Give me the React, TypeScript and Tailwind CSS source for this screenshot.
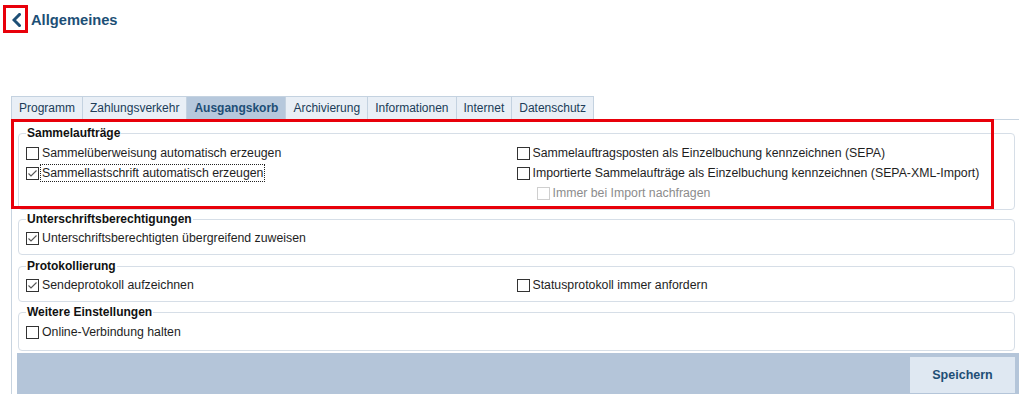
import React from "react";

const Check = ({ checked = false, disabled = false }: { checked?: boolean; disabled?: boolean }) => (
  <span
    className={`w-[13px] h-[13px] shrink-0 border bg-white flex items-center justify-center ${
      disabled ? "border-[#cfcfcf]" : "border-[#333333]"
    }`}
  >
    {checked && (
      <svg width="11" height="11" viewBox="0 0 11 11">
        <polyline points="1.5,5.5 4,8 9.5,2.5" fill="none" stroke="#555" strokeWidth="1.1" />
      </svg>
    )}
  </span>
);

const Row = ({
  label,
  checked,
  disabled,
  focused,
  indent,
}: {
  label: string;
  checked?: boolean;
  disabled?: boolean;
  focused?: boolean;
  indent?: boolean;
}) => (
  <div className={`h-[20px] flex items-center ${indent ? "pl-[20px]" : ""}`}>
    <Check checked={checked} disabled={disabled} />
    <span
      className={`ml-[2px] px-[1px] leading-[16px] text-[12.3px] ${
        disabled ? "text-[#8c8c8c]" : "text-[#1e1e1e]"
      } ${focused ? "outline outline-1 outline-dotted outline-[#222]" : ""}`}
    >
      {label}
    </span>
  </div>
);

const Group = ({ title, children, className = "" }: { title: string; children: React.ReactNode; className?: string }) => (
  <fieldset className={`ml-[1px] mr-[4px] border border-[#d6dee7] rounded-[4px] pl-[7px] pr-[7px] ${className}`}>
    <legend className="px-[1px] text-[12px] leading-[14px] font-bold text-[#111]">{title}</legend>
    <div className="pt-[2px]">{children}</div>
  </fieldset>
);

const tabs = ["Programm", "Zahlungsverkehr", "Ausgangskorb", "Archivierung", "Informationen", "Internet", "Datenschutz"];

export default function App() {
  return (
    <div className="relative w-[1019px] h-[394px] overflow-hidden bg-white font-['Liberation_Sans',Arial,sans-serif]">
      <div className="h-[40px] flex items-center pl-[12px]">
        <svg width="9" height="14" viewBox="0 0 9 14">
          <polyline points="7.5,1.5 2,7 7.5,12.5" fill="none" stroke="#1d4f76" strokeWidth="3" strokeLinecap="square" />
        </svg>
        <span className="ml-[10px] text-[14.7px] font-bold text-[#1d4f76]">Allgemeines</span>
      </div>

      <div className="mt-[56px] ml-[11px] flex h-[23px]">
        {tabs.map((t, i) => (
          <div
            key={t}
            className={`h-[23px] px-[7px] border border-b-0 border-[#c4d2e0] flex items-center text-[12px] ${
              i > 0 ? "-ml-px" : ""
            } ${t === "Ausgangskorb" ? "bg-[#b6c8dc] font-bold text-[#1d4e75]" : "bg-[#e9eff6] text-[#203c58]"}`}
          >
            {t}
          </div>
        ))}
      </div>

      <div className="ml-[11px] border-l border-t border-[#c8d4e0] pl-[5px] pt-[6px] h-[300px]">
        <Group title="Sammelaufträge" className="pb-[6px]">
          <div className="grid grid-cols-2 pt-px">
            <div>
              <Row label="Sammelüberweisung automatisch erzeugen" />
              <Row label="Sammellastschrift automatisch erzeugen" checked focused />
            </div>
            <div>
              <Row label="Sammelauftragsposten als Einzelbuchung kennzeichnen (SEPA)" />
              <Row label="Importierte Sammelaufträge als Einzelbuchung kennzeichnen (SEPA-XML-Import)" />
              <Row label="Immer bei Import nachfragen" disabled indent />
            </div>
          </div>
        </Group>
        <Group title="Unterschriftsberechtigungen" className="mt-[2px] pb-[6px]">
          <Row label="Unterschriftsberechtigten übergreifend zuweisen" checked />
        </Group>
        <Group title="Protokollierung" className="mt-[4px] pb-[6px]">
          <div className="grid grid-cols-2">
            <Row label="Sendeprotokoll aufzeichnen" checked />
            <Row label="Statusprotokoll immer anfordern" />
          </div>
        </Group>
        <Group title="Weitere Einstellungen" className="mt-[3px] pb-[8px]">
          <div className="pt-px">
            <Row label="Online-Verbindung halten" />
          </div>
        </Group>
        <div className="mt-[2px] h-[44px] bg-[#b4c5d9] flex justify-end pt-[4px] pr-[4px]">
          <button className="w-[105px] h-[36px] bg-[#dfe8f2] text-[12.5px] font-bold text-[#1d4e75]">Speichern</button>
        </div>
      </div>

      <div className="absolute left-[3px] top-[5px] w-[25px] h-[28px] border-[3px] border-[#e8000a]" />
      <div className="absolute left-[11px] top-[119px] w-[983px] h-[90px] border-[3px] border-[#e8000a]" />
    </div>
  );
}
